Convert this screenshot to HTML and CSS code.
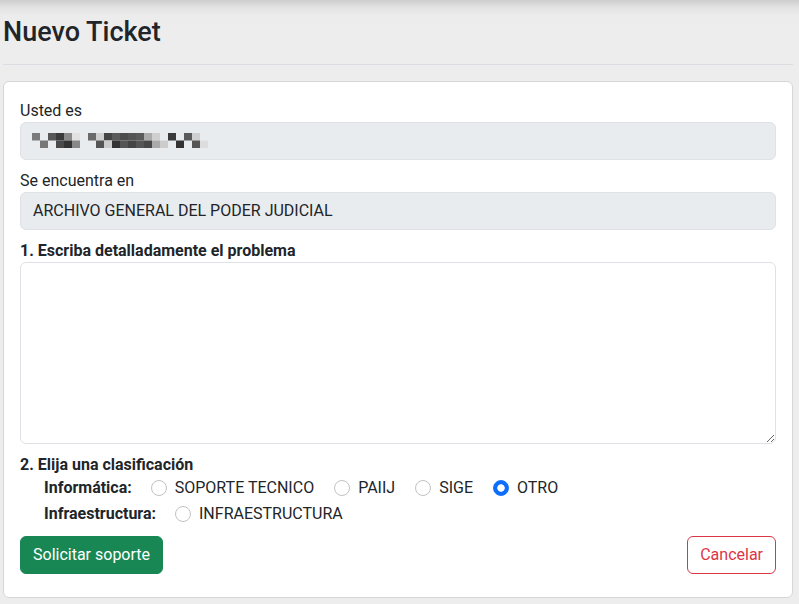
FILE: index.html
```html
<!DOCTYPE html>
<html lang="es">
<head>
<meta charset="utf-8">
<title>Nuevo Ticket</title>
<link rel="stylesheet" href="styles.css">
</head>
<body>
<div class="page">
  <h3 class="title">Nuevo Ticket</h3>
  <hr class="divider">
  <div class="card">
    <div class="group">
      <label class="label">Usted es</label>
      <div class="field">
        <svg class="mosaic" width="176" height="15" viewBox="0 0 176 15" aria-hidden="true">
          <rect x="0" y="0" width="8" height="7.5" fill="#7a7a7a"/>
          <rect x="16" y="0" width="8" height="7.5" fill="#575757"/>
          <rect x="24" y="0" width="8" height="7.5" fill="#3a3a3a"/>
          <rect x="32" y="0" width="8" height="7.5" fill="#8a8a8a"/>
          <rect x="40" y="0" width="8" height="7.5" fill="#e2e2e2"/>
          <rect x="56" y="0" width="8" height="7.5" fill="#6a6a6a"/>
          <rect x="64" y="0" width="8" height="7.5" fill="#cfcfcf"/>
          <rect x="72" y="0" width="8" height="7.5" fill="#454545"/>
          <rect x="80" y="0" width="8" height="7.5" fill="#5a5a5a"/>
          <rect x="88" y="0" width="8" height="7.5" fill="#4c4c4c"/>
          <rect x="96" y="0" width="8" height="7.5" fill="#545454"/>
          <rect x="104" y="0" width="8" height="7.5" fill="#5a5a5a"/>
          <rect x="112" y="0" width="8" height="7.5" fill="#ababab"/>
          <rect x="120" y="0" width="8" height="7.5" fill="#cfcfcf"/>
          <rect x="136" y="0" width="8" height="7.5" fill="#3a3a3a"/>
          <rect x="152" y="0" width="8" height="7.5" fill="#5a5a5a"/>
          <rect x="160" y="0" width="8" height="7.5" fill="#d0d0d0"/>
          <rect x="8" y="7.5" width="8" height="7.5" fill="#777777"/>
          <rect x="24" y="7.5" width="8" height="7.5" fill="#4a4a4a"/>
          <rect x="32" y="7.5" width="8" height="7.5" fill="#333333"/>
          <rect x="40" y="7.5" width="8" height="7.5" fill="#888888"/>
          <rect x="64" y="7.5" width="8" height="7.5" fill="#555555"/>
          <rect x="72" y="7.5" width="8" height="7.5" fill="#cccccc"/>
          <rect x="80" y="7.5" width="8" height="7.5" fill="#333333"/>
          <rect x="88" y="7.5" width="8" height="7.5" fill="#555555"/>
          <rect x="96" y="7.5" width="8" height="7.5" fill="#444444"/>
          <rect x="104" y="7.5" width="8" height="7.5" fill="#555555"/>
          <rect x="112" y="7.5" width="8" height="7.5" fill="#474747"/>
          <rect x="120" y="7.5" width="8" height="7.5" fill="#aaaaaa"/>
          <rect x="128" y="7.5" width="8" height="7.5" fill="#cccccc"/>
          <rect x="144" y="7.5" width="8" height="7.5" fill="#333333"/>
          <rect x="160" y="7.5" width="8" height="7.5" fill="#555555"/>
          <rect x="168" y="7.5" width="8" height="7.5" fill="#dddddd"/>
        </svg>
      </div>
    </div>
    <div class="group">
      <label class="label">Se encuentra en</label>
      <div class="field">ARCHIVO GENERAL DEL PODER JUDICIAL</div>
    </div>
    <div class="group">
      <label class="label bold" for="problema">1. Escriba detalladamente el problema</label>
      <textarea class="textarea" id="problema"></textarea>
    </div>
    <div class="group">
      <div class="label bold">2. Elija una clasificación</div>
      <div class="radio-row">
        <span class="row-label">Informática:</span>
        <label class="option"><input type="radio" name="cls" class="radio"><span>SOPORTE TECNICO</span></label>
        <label class="option"><input type="radio" name="cls" class="radio"><span>PAIIJ</span></label>
        <label class="option"><input type="radio" name="cls" class="radio"><span>SIGE</span></label>
        <label class="option"><input type="radio" name="cls" class="radio" checked><span>OTRO</span></label>
      </div>
      <div class="radio-row">
        <span class="row-label">Infraestructura:</span>
        <label class="option"><input type="radio" name="cls" class="radio"><span>INFRAESTRUCTURA</span></label>
      </div>
    </div>
    <div class="actions">
      <button class="btn btn-success" type="button">Solicitar soporte</button>
      <button class="btn btn-outline-danger" type="button">Cancelar</button>
    </div>
  </div>
</div>
</body>
</html>
```
FILE: styles.css
```css
* { box-sizing: border-box; }

html, body {
  margin: 0;
  padding: 0;
}

body {
  font-family: Roboto, "Liberation Sans", Arial, sans-serif;
  font-size: 16px;
  line-height: 24px;
  color: #212529;
  background-color: #ededed;
  background-image: linear-gradient(to bottom, #cdcdcd 0px, #e3e3e3 8px, #ececec 16px, #ededed 30px);
  background-repeat: no-repeat;
  overflow: hidden;
}

.page {
  padding: 16px 6px 0 3px;
}

.title {
  margin: 0 0 15px 0;
  font-size: 27px;
  line-height: 33px;
  font-weight: 500;
  color: #212529;
}

.divider {
  margin: 0 0 16px 0;
  border: 0;
  border-top: 1px solid #dadde2;
  height: 0;
}

.card {
  background: #fff;
  border: 1px solid #d6d6d6;
  border-radius: 6px;
  padding: 16px 16px 23px 16px;
}

.group {
  margin-bottom: 8px;
}

.label {
  display: block;
  margin: 0;
  line-height: 24px;
  padding-top: 1px;
  margin-bottom: -1px;
}

.bold {
  font-weight: 700;
}

.field {
  display: flex;
  align-items: center;
  height: 38px;
  padding: 6px 12px;
  background: #e9ecef;
  border: 1px solid #dee2e6;
  border-radius: 6px;
  color: #212529;
}

.mosaic {
  display: block;
  margin-left: -1px;
  margin-top: -1px;
}

.textarea {
  display: block;
  width: 100%;
  height: 182px;
  margin: 0;
  padding: 6px 12px;
  border: 1px solid #dee2e6;
  border-radius: 6px;
  background: #fff;
  font: inherit;
  resize: vertical;
}

.radio-row {
  display: flex;
  align-items: center;
  gap: 20px;
  height: 24px;
  margin-bottom: 2px;
  padding-left: 24px;
}

.row-label {
  font-weight: 700;
  margin-right: -1px;
}

.option {
  display: flex;
  align-items: center;
  gap: 8px;
}

.radio {
  appearance: none;
  -webkit-appearance: none;
  width: 16px;
  height: 16px;
  margin: 0;
  border: 1px solid #c2c2c2;
  border-radius: 50%;
  background: #fff;
  flex: none;
}

.radio:checked {
  border-color: #0d6efd;
  background: radial-gradient(circle, #fff 0, #fff 3.4px, #0d6efd 4px);
}

.actions {
  display: flex;
  justify-content: space-between;
  padding-top: 2px;
}

.btn {
  height: 38px;
  padding: 6px 12px;
  border-radius: 6px;
  font: inherit;
  line-height: 24px;
  cursor: pointer;
}

.btn-success {
  background: #198754;
  border: 1px solid #198754;
  color: #fff;
}

.btn-outline-danger {
  background: #fff;
  border: 1px solid #dc3545;
  color: #dc3545;
}
```
